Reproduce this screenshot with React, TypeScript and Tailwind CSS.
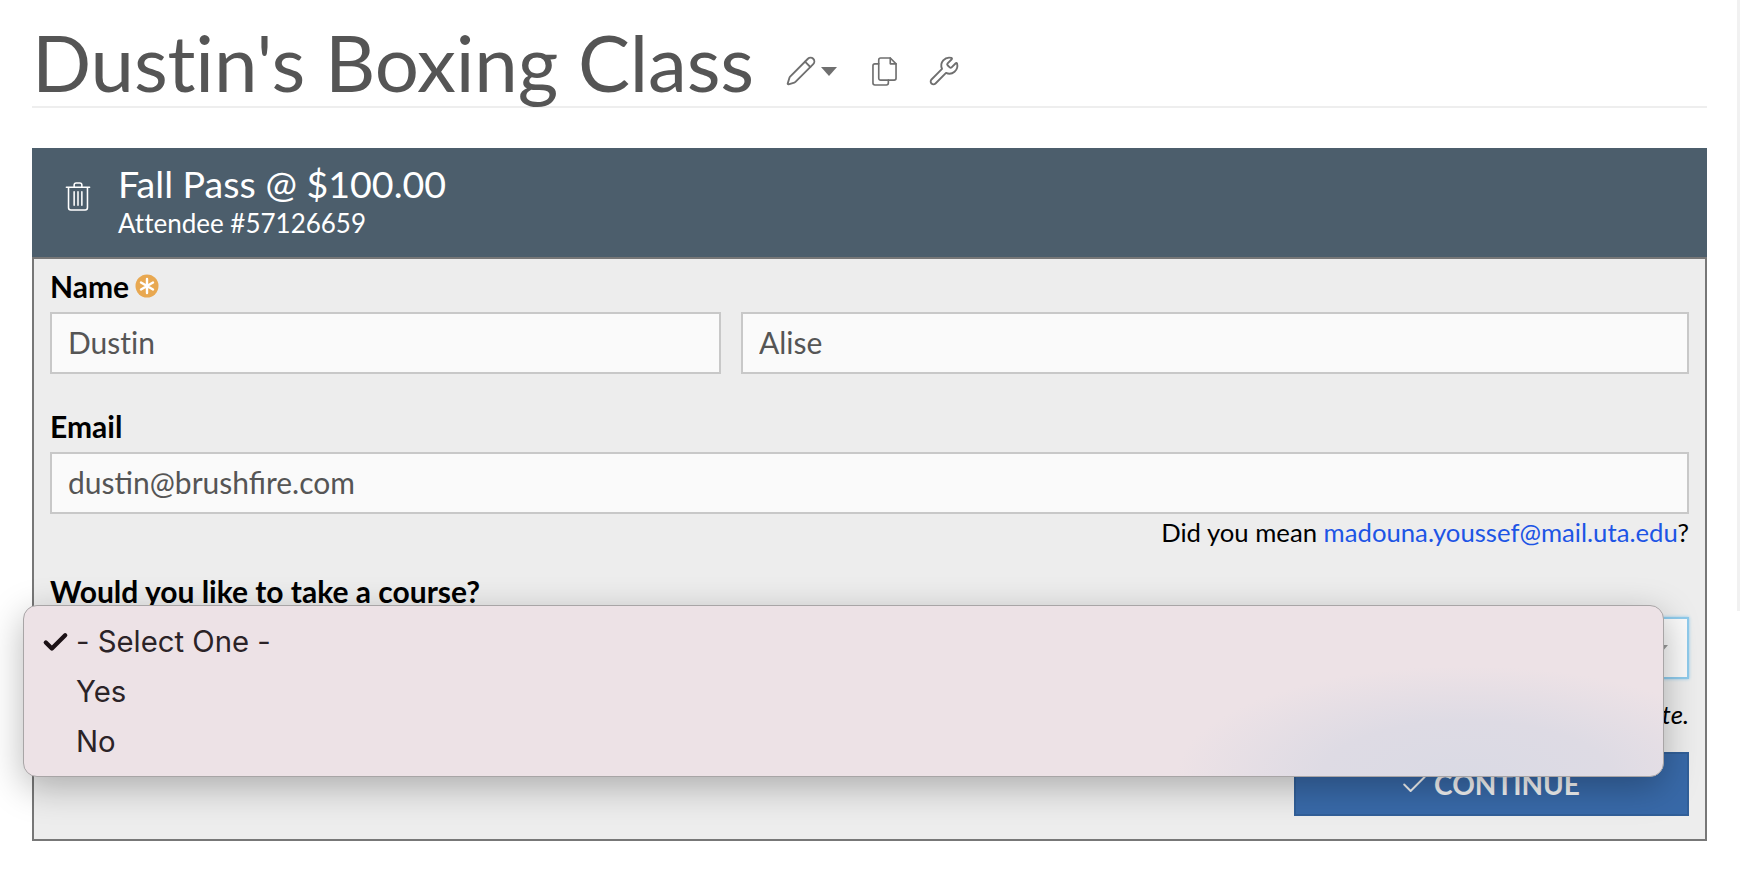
import { Check, Pencil, Wrench } from 'lucide-react';

const lato = "font-['Lato','Liberation_Sans',sans-serif]";

function TrashIcon() {
  return (
    <svg width="26" height="29" viewBox="0 0 26 30" fill="none" stroke="currentColor" strokeWidth="1.6" strokeLinecap="round" strokeLinejoin="round" className="-translate-y-[6px]">
      <path d="M1 5.5h24" />
      <path d="M9 5V3.2C9 2 10 1 11.2 1h3.6C16 1 17 2 17 3.2V5" />
      <path d="M3.2 6v20.5c0 1.4 1 2.5 2.3 2.5h15c1.3 0 2.3-1.1 2.3-2.5V6" />
      <path d="M9 10v14M13 10v14M17 10v14" />
    </svg>
  );
}

function FilesIcon() {
  return (
    <svg width="25" height="29" viewBox="0 0 26 30" fill="none" stroke="#6f6f6f" strokeWidth="1.7" strokeLinecap="round" strokeLinejoin="round">
      <path d="M7 7H3C1.9 7 1 7.9 1 9v18c0 1.1.9 2 2 2h12c1.1 0 2-.9 2-2v-3" />
      <path d="M9 1h10l6 6v15c0 1.1-.9 2-2 2H9c-1.1 0-2-.9-2-2V3c0-1.1.9-2 2-2z" />
      <path d="M19 1v6h6" />
    </svg>
  );
}

function RequiredBadge() {
  return (
    <svg width="24" height="24" viewBox="0 0 24 24" className="shrink-0">
      <circle cx="12" cy="12" r="11.5" fill="#e8a851" />
      <path d="M12 5v14M6 8.5l12 7M18 8.5l-12 7" stroke="#fff" strokeWidth="2.4" strokeLinecap="round" />
    </svg>
  );
}

function Field({ value, className }: { value: string; className?: string }) {
  return (
    <input
      readOnly
      value={value}
      className={`h-[62px] border-2 border-[#c8c8c8] bg-[#fafafa] px-[16px] pb-[2px] text-[30px] text-[#555] outline-none ${className ?? ''}`}
    />
  );
}

export default function App() {
  return (
    <div className={`${lato} relative h-[882px] overflow-hidden bg-white pl-[32px] pr-[33px] pt-[18px] [font-variant-ligatures:none]`}>
      {/* page scrollbar track */}
      <div className="absolute right-0 top-0 h-[611px] w-[3px] bg-[#f1f1f1]" />

      {/* Title */}
      <div className="flex h-[90px] items-center border-b-2 border-[#eeeeee]">
        <h1 className="text-[78px] leading-[89px] font-normal tracking-[-0.15px] text-[#555]">Dustin's Boxing Class</h1>
        <div className="ml-[31px] mt-[18px] flex items-center text-[#6f6f6f]">
          <Pencil size={32} strokeWidth={1.4} />
          <div className="ml-[4px] h-0 w-0 border-x-[8px] border-t-[9px] border-x-transparent border-t-[#6f6f6f]" />
          <div className="ml-[35px]"><FilesIcon /></div>
          <Wrench size={32} strokeWidth={1.4} className="ml-[31px]" />
        </div>
      </div>

      {/* Panel */}
      <div className="mt-[40px]">
        <div className="flex h-[109px] items-center bg-[#4c5e6c] pl-[33px] text-white">
          <TrashIcon />
          <div className="ml-[27px] -mt-[5px]">
            <div className="-translate-y-[2px] text-[37.6px] leading-[46px]">Fall Pass @ $100.00</div>
            <div className="text-[26px] leading-[28px]">Attendee #57126659</div>
          </div>
        </div>

        <div className="h-[584px] border-2 border-[#777] bg-[#ededed] px-[16px] pt-[3px] text-black">
          <div className="flex h-[50px] items-center gap-[6px] pb-[2px] text-[30px] font-bold">
            Name <RequiredBadge />
          </div>
          <div className="flex gap-[20px]">
            <Field value="Dustin" className="w-[671px]" />
            <Field value="Alise" className="min-w-0 flex-1" />
          </div>

          <div className="mt-[28px] flex h-[50px] items-center pb-[2px] text-[30px] font-bold">Email</div>
          <Field value="dustin@brushfire.com" className="w-full [font-variant-ligatures:common-ligatures]" />
          <div className="mt-[2px] text-right text-[25.7px] leading-[32px]">
            Did you mean <span className="text-[#1d55e5]">madouna.youssef@mail.uta.edu</span>?
          </div>

          <div className="mt-[19px] flex h-[50px] items-center pb-[2px] text-[30px] font-bold">Would you like to take a course?</div>
          <div className="flex h-[62px] w-full items-center justify-end border-2 border-[#8fcbec] bg-[#fafafa] pr-[19px] shadow-[0_0_3px_#8fcbec]">
            <div className="h-0 w-0 border-x-[6px] border-t-[7px] border-x-transparent border-t-[#999]" />
          </div>
          <div className="mt-[19px] text-right text-[25.7px] italic leading-[32px]">Please select an option to complete.</div>

          <div className="mt-[22px] flex justify-end">
            <button className="flex h-[64px] w-[395px] items-center justify-center gap-[4px] border-2 border-[#315f98] bg-[#3869a8] pr-[4px] text-[28px] font-bold text-[#f3f3f3]">
              <Check size={31} strokeWidth={1.5} />
              CONTINUE
            </button>
          </div>
        </div>
      </div>

      {/* Native select menu */}
      <div className="absolute left-[23px] top-[605px] flex h-[172px] w-[1641px] flex-col rounded-[14px] border border-[#a8a5a6] bg-[#ede2e6] bg-[radial-gradient(ellipse_290px_110px_at_88%_100%,#dadae4_0%,#dedbe4_50%,#ede2e6_100%)] py-[11px] font-['Inter',sans-serif] text-[29.3px] text-[#2b2327] shadow-[0_10px_36px_rgba(0,0,0,0.28)]">
        <div className="flex h-[50px] shrink-0 items-center pl-[17px]">
          <Check size={29} strokeWidth={3.6} className="text-[#1c1216]" />
          <span className="ml-[6px]">- Select One -</span>
        </div>
        <div className="flex h-[50px] shrink-0 items-center pl-[52px]">Yes</div>
        <div className="flex h-[50px] shrink-0 items-center pl-[52px]">No</div>
      </div>
    </div>
  );
}
